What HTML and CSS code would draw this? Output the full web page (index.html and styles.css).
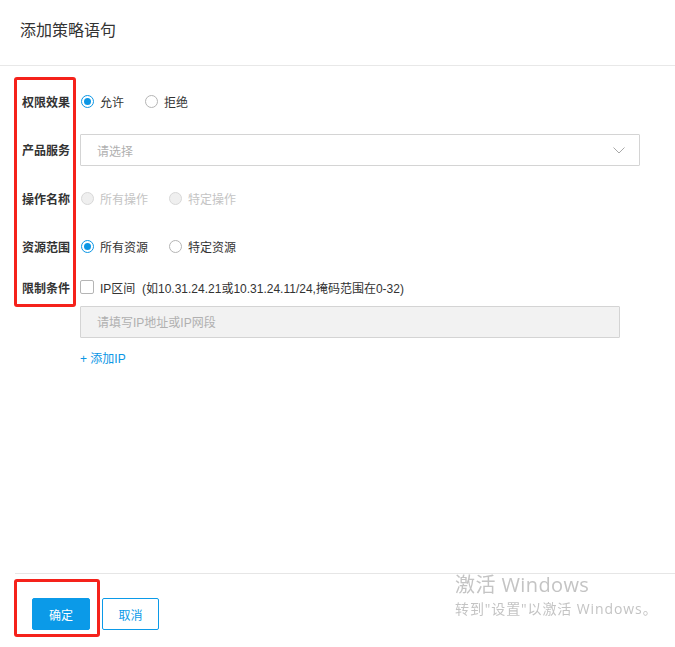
FILE: index.html
```html
<!DOCTYPE html>
<html lang="zh-CN">
<head>
<meta charset="utf-8">
<title>添加策略语句</title>
<link rel="stylesheet" href="styles.css">
</head>
<body>
<div class="dialog">
  <div class="header">添加策略语句</div>
  <div class="main">
    <div class="form">
      <div class="mark"></div>

      <div class="label r1">权限效果</div>
      <div class="ctrl r1">
        <label class="opt"><span class="radio checked"></span>允许</label>
        <label class="opt"><span class="radio"></span>拒绝</label>
      </div>

      <div class="label r2">产品服务</div>
      <div class="ctrl r2">
        <div class="select">
          <span class="ph">请选择</span>
          <svg class="chev" width="12" height="7" viewBox="0 0 12 7"><path d="M0.5 0.5 L6 6 L11.5 0.5" fill="none" stroke="#a8a8a8" stroke-width="1"/></svg>
        </div>
      </div>

      <div class="label r3">操作名称</div>
      <div class="ctrl r3">
        <label class="opt disabled"><span class="radio"></span>所有操作</label>
        <label class="opt disabled"><span class="radio"></span>特定操作</label>
      </div>

      <div class="label r4">资源范围</div>
      <div class="ctrl r4">
        <label class="opt"><span class="radio checked"></span>所有资源</label>
        <label class="opt"><span class="radio"></span>特定资源</label>
      </div>

      <div class="label r5">限制条件</div>
      <div class="ctrl r5">
        <label class="opt"><span class="check"></span>IP区间&nbsp;&nbsp;(如10.31.24.21或10.31.24.11/24,掩码范围在0-32)</label>
      </div>

      <div class="ctrl r6">
        <div class="ipinput"><span class="ph">请填写IP地址或IP网段</span></div>
      </div>

      <div class="ctrl r7">
        <a class="add">+ 添加IP</a>
      </div>
    </div>
  </div>
  <div class="footer">
    <div class="mark2"><button class="btn primary">确定</button></div>
    <button class="btn ghost">取消</button>
  </div>
</div>
<div class="watermark">
  <div class="wm1">激活 Windows</div>
  <div class="wm2">转到"设置"以激活 Windows。</div>
</div>
</body>
</html>
```

FILE: styles.css
```css
html, body {
  margin: 0;
  padding: 0;
  background: #fff;
}
body {
  font-family: "Liberation Sans", "Noto Sans CJK SC", sans-serif;
  font-size: 12px;
  color: #333;
}
.dialog {
  height: 647px;
  display: flex;
  flex-direction: column;
}
.header {
  height: 65px;
  line-height: 61px;
  padding-left: 20px;
  font-size: 16px;
  color: #333;
  border-bottom: 1px solid #e8e8e8;
  box-sizing: content-box;
}
.main {
  flex: 1;
}
.form {
  display: grid;
  grid-template-columns: 62px 1fr;
  grid-template-rows: 48px 49px 48px 48px 34px 34px 38px;
  column-gap: 4px;
  margin: 11px 35px 0 14px;
}
.mark {
  grid-column: 1;
  grid-row: 1 / 6;
  border: 3px solid #f5221b;
  border-radius: 3px;
  margin-bottom: -3px;
}
.label {
  grid-column: 1;
  padding-left: 8px;
  font-weight: bold;
  color: #333;
  display: flex;
  align-items: center;
}
.ctrl {
  grid-column: 2;
  display: flex;
  align-items: center;
}
.r1 { grid-row: 1; }
.r2 { grid-row: 2; }
.r3 { grid-row: 3; }
.r4 { grid-row: 4; }
.r5 { grid-row: 5; }
.r6 { grid-row: 6; }
.r7 { grid-row: 7; }

.opt {
  display: inline-flex;
  align-items: center;
  margin-right: 20px;
  color: #333;
  white-space: nowrap;
}
.opt.disabled {
  color: #c4c4c4;
}
.radio {
  width: 13px;
  height: 13px;
  box-sizing: border-box;
  border: 1px solid #b5b5b5;
  border-radius: 50%;
  margin-left: 1px;
  margin-right: 6px;
  position: relative;
  background: #fff;
}
.radio.checked {
  border-color: #0b96e5;
}
.radio.checked::after {
  content: "";
  position: absolute;
  left: 2px;
  top: 2px;
  width: 7px;
  height: 7px;
  border-radius: 50%;
  background: #0b96e5;
}
.opt.disabled .radio {
  background: #efefef;
  border-color: #d8d8d8;
}
.check {
  width: 14px;
  height: 14px;
  box-sizing: border-box;
  border: 1px solid #b5b5b5;
  border-radius: 2px;
  margin-right: 6px;
}
.select {
  flex: 1;
  height: 32px;
  box-sizing: border-box;
  border: 1px solid #d4d4d4;
  border-radius: 1px;
  display: flex;
  align-items: center;
  justify-content: space-between;
  padding: 0 14px 0 16px;
  margin-top: 1px;
}
.ph {
  color: #b0b0b0;
}
.chev {
  display: block;
}
.ipinput {
  flex: 1;
  margin-right: 20px;
  height: 32px;
  box-sizing: border-box;
  border: 1px solid #d4d4d4;
  border-radius: 1px;
  background: #f2f2f2;
  display: flex;
  align-items: center;
  padding-left: 16px;
  margin-top: 1px;
}
.add {
  color: #0b96e5;
  cursor: pointer;
}
.footer {
  border-top: 1px solid #e6e6e6;
  height: 74px;
  display: flex;
  align-items: flex-start;
  padding-top: 5px;
  box-sizing: border-box;
  margin-left: 15px;
}
.mark2 {
  margin-left: -1px;
  border: 3px solid #f5221b;
  border-radius: 3px;
  padding: 16px 7px 4px 15px;
  margin-right: 2px;
}
.btn {
  display: block;
  height: 32px;
  box-sizing: border-box;
  font-family: inherit;
  font-size: 12px;
  border-radius: 2px;
  padding: 0;
}
.primary {
  width: 58px;
  background: #0b9ae8;
  border: 1px solid #0b9ae8;
  color: #fff;
}
.ghost {
  width: 57px;
  margin-top: 19px;
  background: #fff;
  border: 1px solid #0b9ae8;
  color: #0b9ae8;
}
.watermark {
  position: fixed;
  left: 455px;
  top: 572px;
  color: #c4c4c4;
  font-family: "Open Sans", "Noto Sans CJK SC", sans-serif;
  pointer-events: none;
}
.wm1 {
  font-size: 20px;
  line-height: 26px;
  letter-spacing: 0.4px;
}
.wm2 {
  font-size: 14px;
  line-height: 22px;
  letter-spacing: 0.9px;
}
```
